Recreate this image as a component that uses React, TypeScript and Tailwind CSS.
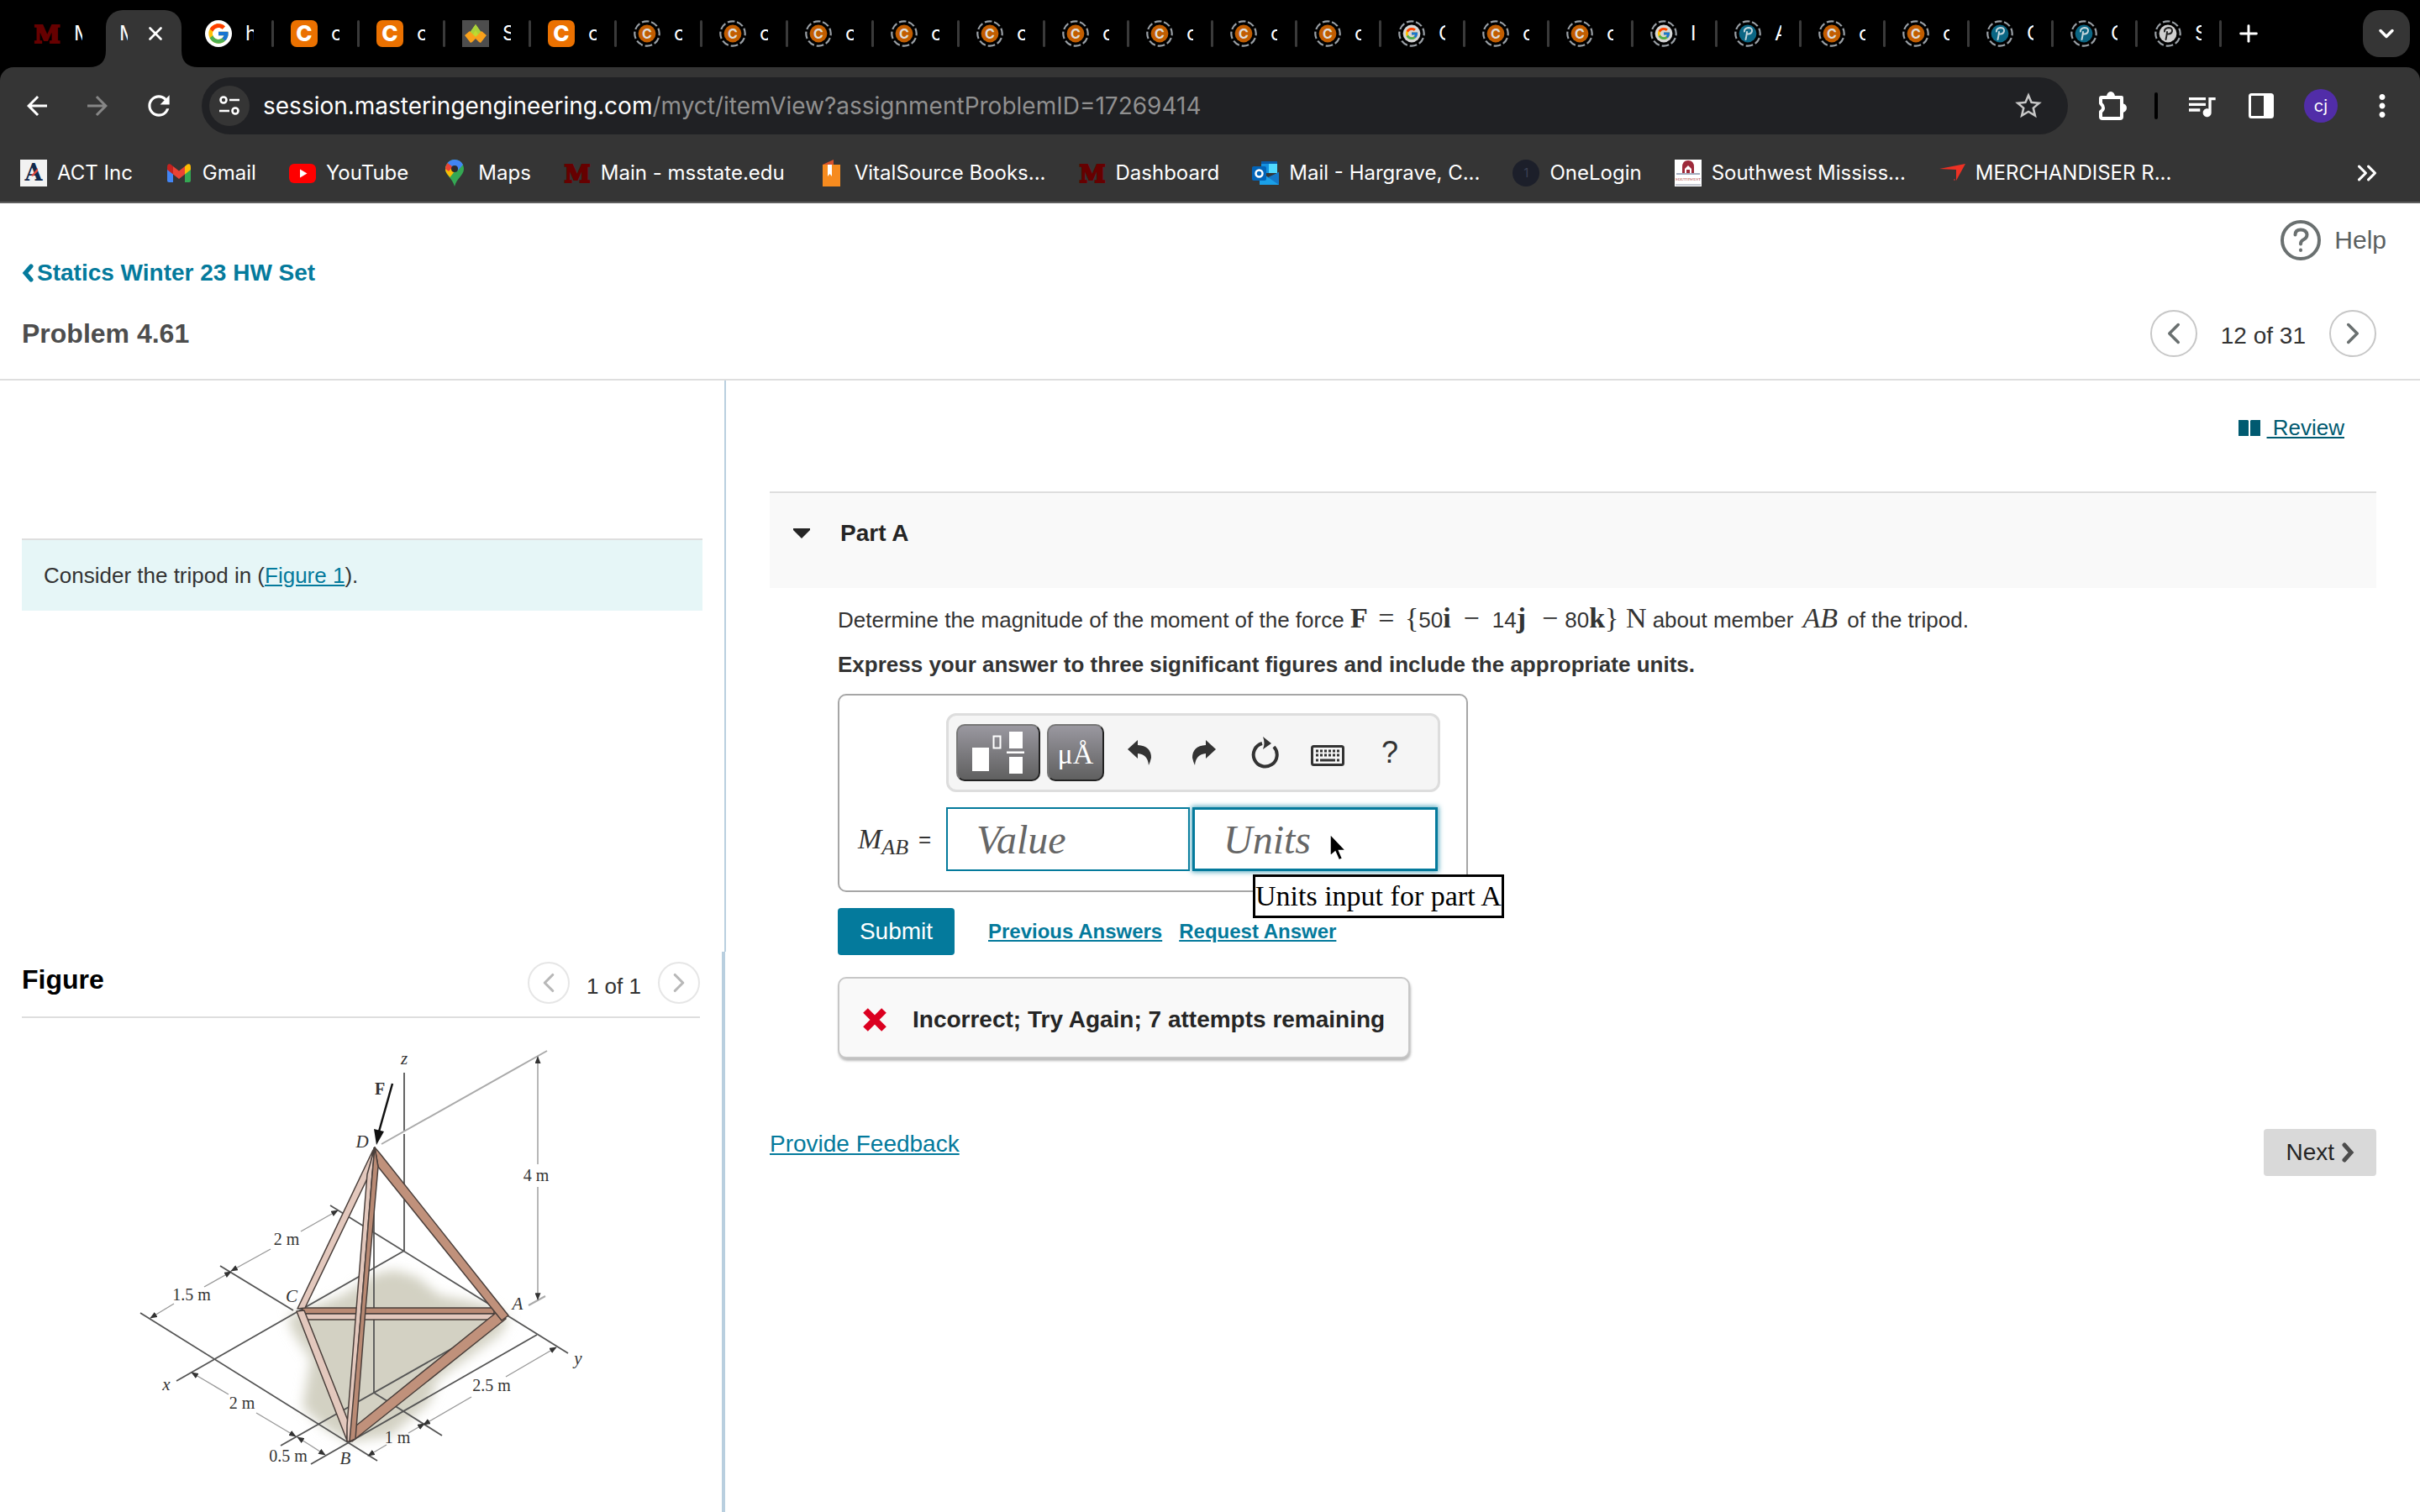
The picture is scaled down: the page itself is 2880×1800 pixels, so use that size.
import React from 'react';
import {
  MdArrowBack,
  MdArrowForward,
  MdRefresh,
  MdStarBorder,
  MdQueueMusic,
  MdMoreVert,
} from 'react-icons/md';
import { FcGoogle } from 'react-icons/fc';
import { ChevronDown, ChevronLeft, ChevronRight, ChevronsRight, Plus, X } from 'lucide-react';

/* ---------- Favicons ---------- */

const StateIcon = () => (
  <svg viewBox="0 0 32 32" className="w-8 h-8 shrink-0">
    <text x="16" y="27" textAnchor="middle" fontSize="28" fontWeight="bold" fill="#660000" stroke="#660000" strokeWidth="2" fontFamily="'DejaVu Serif', serif">M</text>
  </svg>
);

const GoogleIcon = () => (
  <span className="w-8 h-8 shrink-0 rounded-full bg-white flex items-center justify-center">
    <FcGoogle size={28} />
  </span>
);

const CheggIcon = () => (
  <span className="w-8 h-8 shrink-0 rounded-[7px] bg-[#eb7100] text-white text-[26px] leading-none font-extrabold flex items-center justify-center">C</span>
);

const LayersIcon = () => (
  <svg viewBox="0 0 32 32" className="w-8 h-8 shrink-0">
    <rect width="32" height="32" fill="#4d4d4d" />
    <path d="M16 5l7 10-7 6-7-6z" fill="#c3d82e" />
    <path d="M16 5l7 10-4 2-3-5-3 5-4-2z" fill="#a9d13a" />
    <path d="M3 18l6-5 7 7 7-7 6 5-7 9-2-1-4-4-4 4-2 1z" fill="#f9a11b" />
  </svg>
);

const Asleep = ({ color, children }: { color: string; children: React.ReactNode }) => (
  <svg viewBox="0 0 32 32" className="w-8 h-8 shrink-0">
    <circle cx="16" cy="16" r="14.7" fill="none" stroke="#9aa0a6" strokeWidth="2.2" strokeDasharray="8.5 3" transform="rotate(-70 16 16)" />
    <circle cx="16" cy="16" r="10.4" fill={color} />
    {children}
  </svg>
);

const CheggAsleep = () => (
  <Asleep color="#c25d00">
    <text x="16" y="21.5" textAnchor="middle" fontSize="16" fontWeight="bold" fill="#ddd" fontFamily="Inter, sans-serif">C</text>
  </Asleep>
);

const GoogleAsleep = () => (
  <Asleep color="#d6d6d6">
    <g transform="translate(7.5 7.5)">
      <FcGoogle size={17} />
    </g>
  </Asleep>
);

const PearsonAsleep = ({ color, ink }: { color: string; ink: string }) => (
  <Asleep color={color}>
    <path d="M13.5 23q1-4 1.5-9M12 13.500q-.5-3.500 4.500-4.500 5 0 4.500 4-1 4-5.500 3.500" fill="none" stroke={ink} strokeWidth="2" strokeLinecap="round" />
  </Asleep>
);

const cheggSleep = { icon: <CheggAsleep />, title: 'c' };
const pearsonSleep = (title: string) => ({ icon: <PearsonAsleep color="#0b6684" ink="#c4d6dc" />, title });

const wideTabs = [
  { icon: <GoogleIcon />, title: 'h' },
  { icon: <CheggIcon />, title: 'c' },
  { icon: <CheggIcon />, title: 'c' },
  { icon: <LayersIcon />, title: 'S' },
  { icon: <CheggIcon />, title: 'c' },
  cheggSleep,
  cheggSleep,
  cheggSleep,
  cheggSleep,
  cheggSleep,
];

const narrowTabs = [
  cheggSleep,
  cheggSleep,
  cheggSleep,
  cheggSleep,
  { icon: <GoogleAsleep />, title: 'C' },
  cheggSleep,
  cheggSleep,
  { icon: <GoogleAsleep />, title: 'I' },
  pearsonSleep('A'),
  cheggSleep,
  cheggSleep,
  pearsonSleep('C'),
  pearsonSleep('C'),
  { icon: <PearsonAsleep color="#cfcfcf" ink="#222" />, title: 'S' },
];

/* ---------- Browser chrome ---------- */

const Tab = ({ icon, title, narrow }: { icon: React.ReactNode; title: string; narrow?: boolean }) => (
  <button className={`${narrow ? 'w-[100px]' : 'w-[102px]'} h-8 pl-5 flex items-center shrink-0`}>
    {icon}
    <span className={`${narrow ? 'w-2' : 'w-[10px]'} ml-4 overflow-hidden whitespace-nowrap text-left text-2xl leading-8 text-white`}>{title}</span>
    <span className="ml-auto w-[3px] h-8 rounded-full bg-[#3a3a3a]"></span>
  </button>
);

const TabStrip = () => (
  <div className="h-20 pl-5 pr-3 flex items-center bg-black">
    <button className="w-[102px] pl-5 flex items-center shrink-0">
      <StateIcon />
      <span className="ml-4 w-[10px] overflow-hidden text-left text-2xl leading-8 text-white">M</span>
    </button>
    <div className="w-[102px] h-full pt-3 pl-1 shrink-0">
      <div className="relative w-[90px] h-[68px] pb-3 rounded-t-[20px] bg-[#353535] flex items-center">
        <svg viewBox="0 0 20 20" className="absolute -left-5 bottom-0 w-5 h-5"><path d="M20 0v20H0Q20 20 20 0z" fill="#353535" /></svg>
        <svg viewBox="0 0 20 20" className="absolute -right-5 bottom-0 w-5 h-5"><path d="M0 0v20h20Q0 20 0 0z" fill="#353535" /></svg>
        <span className="ml-4 w-[10px] overflow-hidden text-2xl leading-8 text-white">M</span>
        <button aria-label="Close tab" className="ml-5 text-white"><X size={26} strokeWidth={2.5} /></button>
      </div>
    </div>
    {wideTabs.map((t, i) => <Tab key={i} {...t} />)}
    {narrowTabs.map((t, i) => <Tab key={i} {...t} narrow />)}
    <button aria-label="New tab" className="ml-4 text-white"><Plus size={32} strokeWidth={2.2} /></button>
    <button aria-label="Search tabs" className="ml-auto w-14 h-14 rounded-[20px] bg-[#353535] text-white flex items-center justify-center">
      <ChevronDown size={28} strokeWidth={3} />
    </button>
  </div>
);

const AddressRow = () => (
  <div className="h-[92px] pl-[26px] pr-6 flex items-center text-white">
    <button aria-label="Back"><MdArrowBack size={36} /></button>
    <button aria-label="Forward" className="ml-9 text-[#868686]"><MdArrowForward size={36} /></button>
    <button aria-label="Reload" className="ml-9"><MdRefresh size={38} /></button>
    <div className="ml-8 h-[68px] flex-1 pl-[9px] pr-7 rounded-full bg-[#202124] flex items-center">
      <button aria-label="Site information" className="w-12 h-12 rounded-full bg-[#353535] flex items-center justify-center shrink-0">
        <svg viewBox="0 0 24 24" className="w-6 h-6" fill="none" stroke="#fff" strokeWidth="2.6">
          <circle cx="5" cy="5" r="3.500" />
          <path d="M12 5h12M0 18h12" />
          <circle cx="19" cy="18" r="3.500" />
        </svg>
      </button>
      <p className="ml-4 flex-1 text-[28px] leading-9 text-[#909090] whitespace-nowrap">
        <span className="text-white">session.masteringengineering.com</span>/myct/itemView?assignmentProblemID=17269414
      </p>
      <button aria-label="Bookmark this page" className="text-[#c7c7c7]"><MdStarBorder size={38} /></button>
    </div>
    <button aria-label="Extensions" className="ml-9">
      <svg viewBox="0 0 34 36" className="w-[34px] h-9">
        <path d="M4 8h24v23q0 2-2 2H5q-2 0-2-2v-6q6-4 0-10V9q0-1 1-1z" fill="none" stroke="#fff" strokeWidth="4" strokeLinejoin="round" />
        <path d="M10 7a5 6 0 0 1 10 0zM28 15a6 5.500 0 0 1 0 11z" fill="#fff" />
      </svg>
    </button>
    <span className="ml-[33px] w-1 h-8 rounded-full bg-black"></span>
    <button aria-label="Media" className="ml-8"><MdQueueMusic size={40} /></button>
    <button aria-label="Side panel" className="ml-9">
      <svg viewBox="0 0 30 30" className="w-[30px] h-[30px]">
        <rect x="1.500" y="1.500" width="27" height="27" rx="2" fill="none" stroke="#fff" strokeWidth="3" />
        <path d="M18 1h10v28H18z" fill="#fff" />
      </svg>
    </button>
    <button aria-label="Profile" className="ml-9 w-10 h-10 rounded-full bg-[#512da8] text-xl leading-5">cj</button>
    <button aria-label="More" className="ml-8"><MdMoreVert size={42} /></button>
  </div>
);

const bookmarks = [
  {
    label: 'ACT Inc',
    icon: (
      <svg viewBox="0 0 32 32" className="w-8 h-8">
        <rect width="32" height="32" fill="#f2f2f2" />
        <text x="16" y="25" textAnchor="middle" fontSize="27" fontWeight="bold" fill="#13294b" fontFamily="'DejaVu Serif', serif">A</text>
        <path d="M13 19l8-9v4l-6 6z" fill="#e2483d" />
      </svg>
    ),
  },
  {
    label: 'Gmail',
    icon: (
      <svg viewBox="0 0 32 32" className="w-8 h-8">
        <path d="M2 9v16q0 2 2 2h5V14z" fill="#4285f4" />
        <path d="M30 9v16q0 2-2 2h-5V14z" fill="#34a853" />
        <path d="M23 8l3-2.500q4-1.500 4 3.500v3l-7 5.500z" fill="#fbbc04" />
        <path d="M2 9q0-5 4-3.500L9 8v9.500L2 12z" fill="#c5221f" />
        <path d="M9 8l7 5.500L23 8v9.500l-7 5.500-7-5.500z" fill="#ea4335" />
      </svg>
    ),
  },
  {
    label: 'YouTube',
    icon: (
      <svg viewBox="0 0 32 32" className="w-8 h-8">
        <rect y="5" width="32" height="23" rx="6" fill="#f00" />
        <path d="M13 11.500l8.500 5-8.500 5z" fill="#fff" />
      </svg>
    ),
  },
  {
    label: 'Maps',
    icon: (
      <svg viewBox="0 0 32 32" className="w-8 h-8">
        <path d="M16 0C9.500 0 5 5 5 11c0 8 8 10 11 21 3-11 11-13 11-21 0-6-4.500-11-11-11z" fill="#34a853" />
        <path d="M5.500 8C3.500 15 8 17.500 10.500 21L20 9z" fill="#fbbc04" />
        <path d="M7.500 4Q5 7 5 11l4 3 7-8z" fill="#ea4335" />
        <path d="M7.500 4Q11 0 16 0q7 0 10 6l-7 8-6-6z" fill="#4285f4" />
        <circle cx="16" cy="11" r="4" fill="#2b2b2b" />
      </svg>
    ),
  },
  { label: 'Main - msstate.edu', icon: <StateIcon /> },
  {
    label: 'VitalSource Books...',
    icon: (
      <svg viewBox="0 0 32 32" className="w-8 h-8">
        <path d="M6 6L19 0v8z" fill="#d9532c" />
        <path d="M6 6h21v26H6z" fill="#f68b1f" />
        <path d="M12 6h5v14l-2.500-3-2.500 3z" fill="#fff" />
      </svg>
    ),
  },
  { label: 'Dashboard', icon: <StateIcon /> },
  {
    label: 'Mail - Hargrave, C...',
    icon: (
      <svg viewBox="0 0 32 32" className="w-8 h-8">
        <path d="M11 2h19v14H11z" fill="#0a5ba8" />
        <path d="M11 5h9v11h-9z" fill="#1490df" />
        <path d="M20 5h10v11H20z" fill="#50d9ff" />
        <path d="M9 15l12 7 11-7v15H9z" fill="#1aa0e8" />
        <path d="M32 15v15L19 21z" fill="#1478c8" />
        <rect y="8" width="17" height="17" rx="2" fill="#0364b8" />
        <circle cx="8.500" cy="16.500" r="4" fill="none" stroke="#fff" strokeWidth="2.500" />
      </svg>
    ),
  },
  {
    label: 'OneLogin',
    icon: (
      <span className="w-8 h-8 rounded-full bg-[#1c1f2a] text-[#3c4254] text-sm leading-8 text-center block">1</span>
    ),
  },
  {
    label: 'Southwest Mississ...',
    icon: (
      <svg viewBox="0 0 32 32" className="w-8 h-8">
        <rect width="32" height="32" fill="#fff" />
        <path d="M9 16V9q0-8 7-8t7 8v7z" fill="#9e2a3a" />
        <path d="M12 16v-5l4-4 4 4v5z" fill="#fff" />
        <path d="M14 16v-4h4v4z" fill="#9e2a3a" />
        <path d="M2 17h28" stroke="#4a5a80" strokeWidth="1" />
        <text x="16" y="25" textAnchor="middle" fontSize="5" fill="#a33" fontFamily="'Liberation Serif', serif">SOUTHWEST</text>
        <path d="M1 30h30" stroke="#8a90a5" strokeWidth="1" />
      </svg>
    ),
  },
  {
    label: 'MERCHANDISER R...',
    icon: (
      <svg viewBox="0 0 32 32" className="w-8 h-8">
        <path d="M1 11L32 5 21 25V12z" fill="#ee3124" />
        <circle cx="19" cy="24" r="1" fill="#a33" />
      </svg>
    ),
  },
];

const BookmarksBar = () => (
  <nav className="h-[68px] pl-6 pr-11 flex items-center gap-[39px] text-2xl leading-8 text-white">
    {bookmarks.map((b) => (
      <a key={b.label} href="#" className="flex items-center gap-3 whitespace-nowrap">
        {b.icon}
        <span>{b.label}</span>
      </a>
    ))}
    <button aria-label="More bookmarks" className="ml-auto"><ChevronsRight size={38} strokeWidth={2} /></button>
  </nav>
);

/* ---------- Tripod drawing ---------- */

const axes = [
  'M341 48V117M341 121V260',
  'M253 206L536 382',
  'M341 260L70 415',
  'M122 278L209 331',
  'M27 334L309 510',
  'M230 514L499 360',
  'M305 137V429',
  'M194 492L402 374',
  'M305 429L386 480',
];

// each dimension is a pair of segments that point away from its label
const dims = [
  { x1: 500, y1: 157, x2: 500, y2: 29 },
  { x1: 500, y1: 184, x2: 500, y2: 318 },
  { x1: 218, y1: 237, x2: 262, y2: 212 },
  { x1: 182, y1: 258, x2: 135, y2: 284 },
  { x1: 103, y1: 303, x2: 135, y2: 285 },
  { x1: 67, y1: 323, x2: 39, y2: 340 },
  { x1: 132, y1: 431, x2: 88, y2: 405 },
  { x1: 165, y1: 453, x2: 212, y2: 481 },
  { x1: 230, y1: 492, x2: 214, y2: 482 },
  { x1: 230, y1: 492, x2: 247, y2: 503 },
  { x1: 320, y1: 491, x2: 298, y2: 504 },
  { x1: 346, y1: 477, x2: 365, y2: 466 },
  { x1: 421, y1: 434, x2: 364, y2: 467 },
  { x1: 462, y1: 410, x2: 522, y2: 375 },
];

const lengths = [
  { x: 498, y: 177, t: '4 m' },
  { x: 201, y: 253, t: '2 m' },
  { x: 88, y: 319, t: '1.5 m' },
  { x: 148, y: 448, t: '2 m' },
  { x: 203, y: 511, t: '0.5 m' },
  { x: 333, y: 489, t: '1 m' },
  { x: 445, y: 427, t: '2.5 m' },
];

const points = [
  { x: 341, y: 38, t: 'z' },
  { x: 291, y: 137, t: 'D' },
  { x: 207, y: 321, t: 'C' },
  { x: 476, y: 330, t: 'A' },
  { x: 548, y: 395, t: 'y' },
  { x: 58, y: 426, t: 'x' },
  { x: 271, y: 514, t: 'B' },
];

const Tripod = () => (
  <svg viewBox="0 0 600 530" className="w-[600px] h-[530px]" role="img" aria-label="Tripod with force F applied at D" fontFamily="'Liberation Serif', serif" fill="#333">
    <defs>
      <filter id="soft" x="-20%" y="-20%" width="140%" height="140%">
        <feGaussianBlur stdDeviation="7" />
      </filter>
      <marker id="tip" viewBox="0 0 10 8" refX="9" refY="4" markerWidth="9" markerHeight="7" markerUnits="userSpaceOnUse" orient="auto">
        <path d="M0 0l10 4-10 4z" fill="#333" />
      </marker>
    </defs>

    <path d="M203 338L268 313 308 287 330 283 356 291 383 313 440 324 466 341 455 360 380 414 372 440 325 480 276 488 245 470 220 446 230 389 207 355z" fill="#d3d1c3" filter="url(#soft)" />
    <path d="M218 338H452L278 482z" fill="#d3d1c3" />

    <g fill="none" stroke="#555" strokeWidth="1.8">
      {axes.map((d) => <path key={d} d={d} />)}
    </g>
    <path d="M314 133L511 22M489 325L509 314" fill="none" stroke="#aaa" strokeWidth="2" />
    <g stroke="#999" strokeWidth="1.4">
      {dims.map((d, i) => <line key={i} {...d} markerEnd="url(#tip)" />)}
    </g>

    {/* members */}
    <g stroke="#4a3f3b" strokeWidth="1.5" strokeLinejoin="round">
      <path d="M220 328H448V335H220z" fill="#b98a74" />
      <path d="M220 335H448L444 342H224z" fill="#e3c8bd" />
      <path d="M304 140L299 170 223 328 214 329z" fill="#e3c8bd" />
      <path d="M213 332L222 331 274 462 273 486z" fill="#e3c8bd" />
      <path d="M450 334L462 341 279 487 284 468z" fill="#c0917b" />
      <path d="M306 137L312 144 465 337 457 343 310 160z" fill="#c0917b" />
      <path d="M306 137L297 169 284 330 273 468 273 487H277L290 330 303 169z" fill="#e3c8bd" />
      <path d="M306 137L303 169 290 330 276 487 283 484 295 330 310 160z" fill="#b98a74" />
    </g>

    <path d="M327 61L311 118" stroke="#111" strokeWidth="2.500" />
    <path d="M305 115L317 118 308 134z" fill="#111" />
    <text x="312" y="74" textAnchor="middle" fontSize="20" fontWeight="bold">F</text>

    <g fontSize="20" textAnchor="middle">
      {lengths.map((l) => <text key={`${l.x}-${l.y}`} x={l.x} y={l.y}>{l.t}</text>)}
    </g>
    <g fontSize="21" fontStyle="italic" textAnchor="middle">
      {points.map((p) => <text key={p.t} x={p.x} y={p.y}>{p.t}</text>)}
    </g>
  </svg>
);

/* ---------- Page ---------- */

const PageHeader = () => (
  <header className="pl-[26px] pr-10 pb-[26px] border-b-2 border-[#dedede] flex justify-between">
    <div className="pt-[65px]">
      <a href="#" className="flex items-center gap-1 text-[28px] leading-9 font-bold text-[#047a9c]">
        <svg viewBox="0 0 14 24" className="w-[14px] h-6" fill="none" stroke="#047a9c" strokeWidth="5" strokeLinecap="round"><path d="M11 4l-7 8 7 8" /></svg>
        Statics Winter 23 HW Set
      </a>
      <h1 className="mt-[34px] text-[32px] leading-10 font-bold text-[#4d4d4d]">Problem 4.61</h1>
    </div>
    <div className="pt-5 flex flex-col items-end">
      <button className="flex items-center gap-4 text-[30px] leading-9 text-[#5c6161]">
        <svg viewBox="0 0 48 48" className="w-12 h-12" fill="none" stroke="#6a7070" strokeWidth="4" strokeLinecap="round">
          <circle cx="24" cy="24" r="22" />
          <path d="M17.500 17.500q0-6 6.500-6t7.500 5.500q0 4.500-4.500 6.500-3 1.500-3 5" />
          <path d="M24 35.500v.5" />
        </svg>
        Help
      </button>
      <div className="mt-[59px] mr-3 flex items-center text-[28px] leading-9 text-[#333]">
        <button aria-label="Previous item" className="w-14 h-14 rounded-full border-2 border-[#c7c7c7] text-[#6a7070] flex items-center justify-center"><ChevronLeft size={42} strokeWidth={2} /></button>
        <span className="mx-7 pt-[6px]">12 of 31</span>
        <button aria-label="Next item" className="w-14 h-14 rounded-full border-2 border-[#c7c7c7] text-[#6a7070] flex items-center justify-center"><ChevronRight size={42} strokeWidth={2} /></button>
      </div>
    </div>
  </header>
);

const Sidebar = () => (
  <aside className="w-[30%] shrink-0 flex flex-col">
    <div className="h-[680px] pt-[188px] px-[26px] border-r-2 border-[#b9cfdf]">
      <p className="h-[86px] px-[26px] border-t-2 border-[#dedede] bg-[#e6f6f7] flex items-center text-[26px] leading-9 text-[#333]">
        <span>Consider the tripod in (<a href="#figure" className="text-[#047a9c] underline">Figure 1</a>).</span>
      </p>
    </div>
    <section id="figure" className="flex-1 mr-[1px] px-[26px] pt-3 border-r-4 border-[#b9cfdf]">
      <div className="pb-[15px] border-b-2 border-[#dedede] flex items-center">
        <h2 className="flex-1 pb-2 text-[32px] leading-10 font-bold text-black">Figure</h2>
        <button aria-label="Previous figure" className="w-[50px] h-[50px] rounded-full border-2 border-[#e6e6e6] text-[#b8b8b8] flex items-center justify-center"><ChevronLeft size={38} strokeWidth={2} /></button>
        <span className="mx-5 pt-2 text-[26px] leading-9 text-[#333]">1 of 1</span>
        <button aria-label="Next figure" className="w-[50px] h-[50px] rounded-full border-2 border-[#e6e6e6] text-[#b8b8b8] flex items-center justify-center"><ChevronRight size={38} strokeWidth={2} /></button>
      </div>
      <div className="mt-[17px] ml-[114px]">
        <Tripod />
      </div>
    </section>
  </aside>
);

const MathToolbar = () => (
  <div className="w-[588px] h-[94px] px-[9px] rounded-xl border-[3px] border-[#dddddd] bg-[#f5f5f5] flex items-center text-[#333]">
    <button aria-label="Templates" className="w-[100px] h-[68px] rounded-[10px] border-2 border-[#777] border-r-[#222] border-b-[#222] bg-gradient-to-b from-[#9a98a0] to-[#606060] flex items-center justify-center">
      <svg viewBox="0 0 64 52" className="w-16 h-[52px]" fill="#fff">
        <path d="M1 20h20v28H1zM45 1h16v20H45zM45 31h16v20H45zM42 24.500h21v2.500H42z" />
        <path d="M26.500 6.500h8v14h-8z" fill="none" stroke="#fff" strokeWidth="2" />
      </svg>
    </button>
    <button aria-label="Units" className="ml-2 w-[68px] h-[68px] pt-1 rounded-[10px] border-2 border-[#777] border-r-[#222] border-b-[#222] bg-gradient-to-b from-[#9a98a0] to-[#606060] text-white text-[34px] leading-10 font-['Liberation_Serif',serif]">μÅ</button>
    <button aria-label="Undo" className="ml-7">
      <svg viewBox="0 0 28 30" className="w-7 h-[30px]" fill="#333"><path d="M0 11L12 0v6q16 1 16 15-1 5-3 9-1-13-13-14v6z" /></svg>
    </button>
    <button aria-label="Redo" className="ml-[49px]">
      <svg viewBox="0 0 28 30" className="w-7 h-[30px]" fill="#333"><path d="M28 11L16 0v6Q0 7 0 21q1 5 3 9 1-13 13-14v6z" /></svg>
    </button>
    <button aria-label="Reset" className="ml-[41px]">
      <svg viewBox="0 0 34 38" className="w-[34px] h-[38px]"><path d="M14 8A14 14 0 1 0 28 12" fill="none" stroke="#333" strokeWidth="4" /><path d="M15 0l10 8-10 7q3-7 0-15z" fill="#333" /></svg>
    </button>
    <button aria-label="Keyboard shortcuts" className="ml-[38px] pt-[7px]">
      <svg viewBox="0 0 40 25" className="w-10 h-[25px]" fill="none" stroke="#333"><rect x="1.500" y="1.500" width="37" height="22" rx="2" strokeWidth="3" /><path d="M6 7h28M6 12h28" strokeWidth="3" strokeDasharray="3 2" /><path d="M6 18h3M11 18h18M31 18h3" strokeWidth="3" /></svg>
    </button>
    <button aria-label="Help" className="ml-11 text-[36px] leading-10">?</button>
  </div>
);

const AnswerBox = () => (
  <div className="w-[750px] pt-[21px] pb-[23px] rounded-[10px] border-2 border-[#a6a6a6] grid grid-cols-[127px_1fr]">
    <div className="col-start-2"><MathToolbar /></div>
    <label htmlFor="value" className="mt-[18px] pl-[22px] flex items-center text-[26px] leading-9 text-[#333]">
      <span className="font-['Liberation_Serif',serif] italic text-[34px]">M<sub className="text-[26px]">AB</sub></span>
      <span className="ml-3">=</span>
    </label>
    <div className="mt-[18px] h-[76px] flex gap-[3px]">
      <input id="value" placeholder="Value" className="w-[290px] h-full pl-[34px] border-2 border-[#047a9c] font-['Liberation_Serif',serif] italic text-[48px] placeholder:text-[#666]" />
      <div className="relative">
        <input aria-label="Units" placeholder="Units" className="w-[292px] h-full pl-[34px] border-[3px] border-[#047a9c] shadow-[0_0_6px_1px_#4aa3bb] font-['Liberation_Serif',serif] italic text-[48px] placeholder:text-[#666]" />
        <svg viewBox="0 0 24 36" className="absolute left-[162px] top-[30px] w-6 h-9"><path d="M2 2v26l6-5 4.500 10 4-2-4-9.500h8z" fill="#000" stroke="#fff" strokeWidth="1.500" /></svg>
        <div role="tooltip" className="absolute left-[72px] top-20 z-10 h-[52px] border-[3px] border-black bg-white whitespace-nowrap font-['Liberation_Serif',serif] text-[34px] leading-[46px] text-black">Units input for part A</div>
      </div>
    </div>
  </div>
);

const Question = () => (
  <main className="flex-1 px-[52px] pt-[38px]">
    <div className="pr-[38px] flex justify-end items-center text-[26px] leading-9 text-[#005a70]">
      <svg viewBox="0 0 26 20" className="w-[26px] h-5 mr-2"><path d="M0 1h11l1 1v18H0zM26 1H15l-1 1v18h12z" fill="#005a70" /></svg>
      <a href="#" className="underline whitespace-pre"> Review</a>
    </div>

    <button className="mt-[58px] w-full pl-7 pt-[30px] pb-[47px] border-t-2 border-[#dedede] bg-[#f9f9f9] flex items-center text-left text-[28px] leading-9 font-bold text-[#252525]">
      <svg viewBox="0 0 20 12" className="w-5 h-3 mr-9"><path d="M0 0h20v2L10 12 0 2z" fill="#252525" /></svg>
      Part A
    </button>

    <div className="pl-[81px] text-[26px] text-[#333]">
      <p className="mt-3 leading-[48px]">
        Determine the magnitude of the moment of the force{' '}
        <span className="font-['Liberation_Serif',serif] text-[34px]"><b>F</b> <span className="mx-1">=</span> {'{'}</span>50
        <b className="font-['Liberation_Serif',serif] text-[34px]">i</b>
        <span className="mx-[15px] font-['Liberation_Serif',serif] text-[34px]">−</span>14
        <b className="font-['Liberation_Serif',serif] text-[34px]">j</b>
        <span className="ml-[19px] mr-2 font-['Liberation_Serif',serif] text-[34px]">−</span>80
        <span className="font-['Liberation_Serif',serif] text-[34px]"><b>k</b>{'}'} N</span> about member{' '}
        <i className="mx-1 font-['Liberation_Serif',serif] text-[34px]">AB</i> of the tripod.
      </p>
      <p className="mt-[11px] mb-[17px] leading-9 font-bold">Express your answer to three significant figures and include the appropriate units.</p>

      <AnswerBox />

      <div className="mt-[19px] flex items-center text-2xl leading-8 font-bold text-[#047a9c]">
        <button className="w-[139px] h-14 mr-10 rounded-[4px] bg-[#047a9c] text-[28px] font-normal text-white">Submit</button>
        <a href="#" className="mr-5 underline">Previous Answers</a>
        <a href="#" className="underline">Request Answer</a>
      </div>

      <div className="mt-[26px] w-fit h-[97px] pt-1 px-7 rounded-[10px] border-2 border-[#c7c7c7] bg-[#f9f9f9] shadow-[1px_3px_3px_#bbb] flex items-center gap-[31px] text-[28px] leading-9 font-bold text-[#252525]">
        <svg viewBox="0 0 28 28" className="w-7 h-7" stroke="#db0020" strokeWidth="8"><path d="M3 3l22 22M25 3L3 25" /></svg>
        Incorrect; Try Again; 7 attempts remaining
      </div>
    </div>

    <div className="mt-[84px] flex items-start justify-between text-[28px] leading-9">
      <a href="#" className="text-[#047a9c] underline">Provide Feedback</a>
      <button className="h-14 px-[26px] rounded-[4px] bg-[#d9d9d9] flex items-center gap-2 text-[#252525]">
        Next
        <svg viewBox="0 0 16 26" className="w-4 h-[26px]" fill="none" stroke="#4d4d4d" strokeWidth="5" strokeLinecap="round"><path d="M4 4l8 9-8 9" /></svg>
      </button>
    </div>
  </main>
);

export default function App() {
  return (
    <div className="min-h-screen flex flex-col bg-white font-['Liberation_Sans',Arial,sans-serif]">
      <div className="bg-black font-[Inter,sans-serif]">
        <TabStrip />
        <div className="rounded-t-[16px] bg-[#353535] border-b-2 border-[#5e5e5e]">
          <AddressRow />
          <BookmarksBar />
        </div>
      </div>
      <PageHeader />
      <div className="flex-1 flex">
        <Sidebar />
        <Question />
      </div>
    </div>
  );
}
